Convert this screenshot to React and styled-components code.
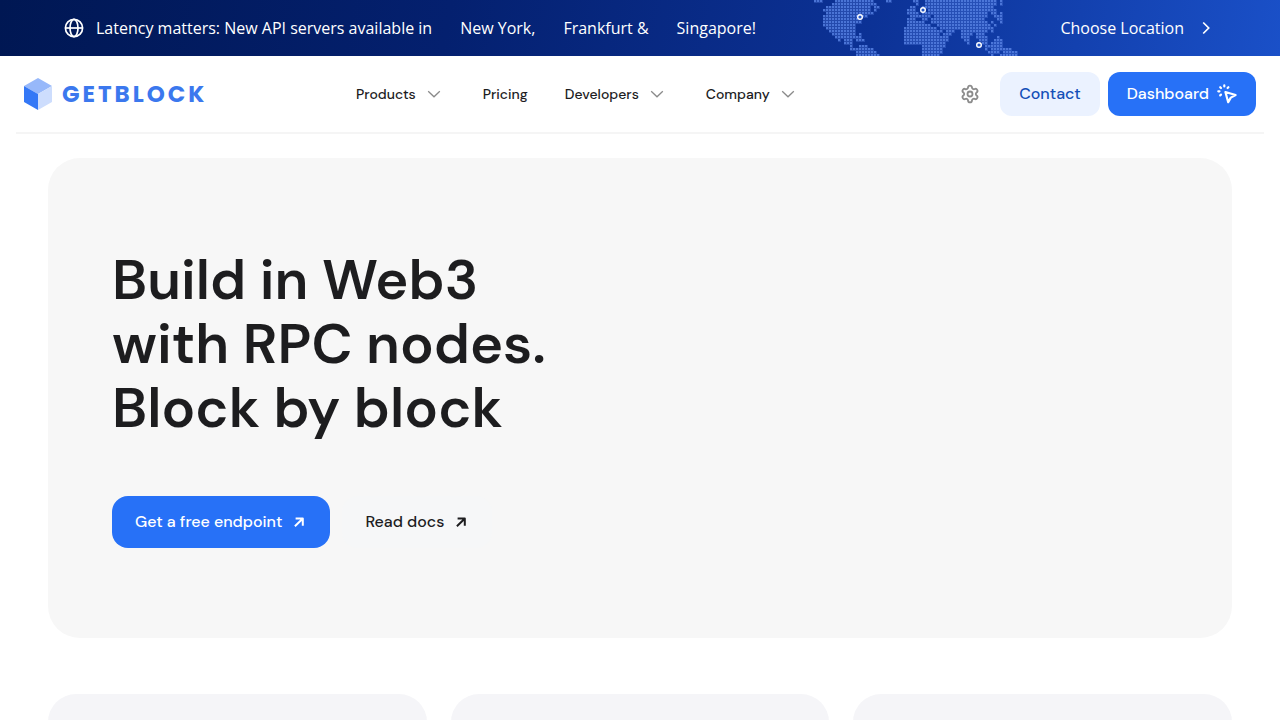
import React from "react";
import styled, { createGlobalStyle } from "styled-components";
import { Settings } from "lucide-react";

// Land masses of the banner map, one list of [first, last] columns per row
const mapRows = [
  [[0, 2], [7, 19], [24, 25], [33, 34], [37, 60], [62, 62]],
  [[6, 20], [34, 34], [37, 60], [62, 62]],
  [[4, 18], [20, 21], [32, 33], [36, 59]],
  [[3, 18], [20, 20], [31, 33], [38, 60]],
  [[4, 19], [31, 34], [36, 57], [59, 60], [62, 62]],
  [[3, 17], [32, 38], [40, 57], [60, 62]],
  [[3, 15], [31, 33], [36, 37], [39, 56], [61, 62]],
  [[3, 15], [31, 36], [39, 57], [59, 59], [62, 62]],
  [[3, 13], [31, 38], [41, 58], [60, 60]],
  [[4, 13], [30, 40], [42, 59]],
  [[5, 13], [30, 42], [44, 46], [49, 57], [59, 59]],
  [[6, 13], [15, 15], [30, 41], [43, 45], [49, 52], [54, 56]],
  [[7, 15], [30, 44], [49, 51], [54, 57], [61, 61]],
  [[8, 8], [10, 12], [14, 16], [30, 44], [50, 51], [55, 57], [60, 62]],
  [[10, 12], [30, 43], [51, 51], [56, 57], [59, 62]],
  [[12, 12], [15, 17], [36, 43], [57, 62]],
  [[12, 19], [36, 42], [57, 57], [59, 65]],
  [[14, 20], [36, 42], [58, 61], [63, 67]],
  [[14, 21], [36, 41], [59, 59], [62, 67]],
];

const cities = [
  { name: "New York", x: 46, y: 17 },
  { name: "Frankfurt", x: 109, y: 10 },
  { name: "Singapore", x: 165, y: 45 },
];

const navLinks = [
  { title: "Products", menu: true },
  { title: "Pricing", menu: false },
  { title: "Developers", menu: true },
  { title: "Company", menu: true },
];

const GlobeIcon = () => (
  <svg width="20" height="20" viewBox="0 0 20 20" fill="none" stroke="#fff" strokeWidth="1.7">
    <circle cx="10" cy="10" r="8.6" />
    <ellipse cx="10" cy="10" rx="4" ry="8.6" />
    <path d="M1.4 10h17.2" />
  </svg>
);

const ArrowIcon = () => (
  <svg width="16" height="16" viewBox="0 0 16 16" fill="none" stroke="currentColor" strokeWidth="2" strokeLinejoin="round">
    <path d="M4.6 4.6h7.2v7.2M11.6 4.8L3.9 12.3" />
  </svg>
);

const ChevronIcon = () => (
  <svg width="24" height="24" viewBox="0 0 24 24" fill="none" stroke="#8a8a8a" strokeWidth="1.3">
    <path d="M6.2 9.2l5.8 5.6 5.8-5.6" />
  </svg>
);

const ClickIcon = () => (
  <svg width="20" height="20" viewBox="0 0 20 20" fill="none" stroke="#fff" strokeWidth="2.2" strokeLinecap="round" strokeLinejoin="round">
    <path d="M8.4 8L18.6 11L13.8 13.6L11.2 18.2Z" />
    <path d="M7.3 1.3V2.5M3.2 3.2L4 4M1.3 7.3H2.5M3.2 11.4L4 10.6M11.4 3.2L10.6 4" />
  </svg>
);

const LogoCube = () => (
  <svg width="28" height="32" viewBox="0 0 28 32">
    <path d="M14 0L28 8L14 16L0 8Z" fill="#97b8fa" />
    <path d="M0 8L14 16V32L0 24Z" fill="#3478f6" />
    <path d="M28 8L14 16V32L28 24Z" fill="#cdddfd" />
  </svg>
);

const WorldMap = () => (
  <MapSvg width="204" height="56" viewBox="0 0 204 56" aria-hidden="true">
    <defs>
      <pattern id="dot" width="3" height="3" patternUnits="userSpaceOnUse">
        <rect width="3" height="3" fill="#5c86e8" opacity="0.3" />
        <rect width="2" height="2" fill="#5c86e8" opacity="0.7" />
      </pattern>
    </defs>
    {mapRows.map((runs, row) =>
      runs.map(([from, to]) => (
        <rect
          key={`${row}-${from}`}
          x={from * 3}
          y={row * 3}
          width={(to - from + 1) * 3}
          height="3"
          fill="url(#dot)"
        />
      ))
    )}
    {cities.map((city) => (
      <circle
        key={city.name}
        cx={city.x}
        cy={city.y}
        r="2.3"
        fill="#2456c4"
        stroke="#fff"
        strokeWidth="1.4"
      />
    ))}
  </MapSvg>
);

function App() {
  return (
    <>
      <GlobalStyle />
      <Banner>
        <BannerIcon>
          <GlobeIcon />
        </BannerIcon>
        <BannerCities>
          <span>Latency matters: New API servers available in</span>
          <span>New York,</span>
          <span>Frankfurt &amp;</span>
          <span>Singapore!</span>
        </BannerCities>
        <WorldMap />
        <BannerLink href="#locations">
          Choose Location
          <svg width="20" height="20" viewBox="0 0 20 20" fill="none" stroke="#fff" strokeWidth="1.7">
            <path d="M7.2 4.5l5.5 5.5-5.5 5.5" />
          </svg>
        </BannerLink>
      </Banner>
      <Header>
        <Logo href="/">
          <LogoCube />
          GETBLOCK
        </Logo>
        <Nav>
          {navLinks.map((link) =>
            link.menu ? (
              <NavButton key={link.title} type="button">
                {link.title}
                <ChevronIcon />
              </NavButton>
            ) : (
              <a key={link.title} href="#pricing">
                {link.title}
              </a>
            )
          )}
        </Nav>
        <HeaderActions>
          <SettingsButton type="button" aria-label="Settings">
            <Settings size={20} strokeWidth={2.2} />
          </SettingsButton>
          <HeaderButton type="button">Contact</HeaderButton>
          <HeaderButton type="button" $primary>
            Dashboard
            <ClickIcon />
          </HeaderButton>
        </HeaderActions>
      </Header>
      <Main>
        <Hero>
          <HeroTitle>
            Build in Web3
            <br />
            with RPC nodes.
            <br />
            Block by block
          </HeroTitle>
          <HeroActions>
            <HeroLink href="#endpoint" $primary>
              Get a free endpoint
              <ArrowIcon />
            </HeroLink>
            <HeroLink href="#docs">
              Read docs
              <ArrowIcon />
            </HeroLink>
          </HeroActions>
        </Hero>
        <Cards>
          <Card />
          <Card />
          <Card />
        </Cards>
      </Main>
    </>
  );
}

export default App;

const GlobalStyle = createGlobalStyle`
  * {
    box-sizing: border-box;
  }
  html {
    scrollbar-width: none;
  }
  body {
    margin: 0;
    background: #fff;
    color: #1d1d1f;
    font-family: "DM Sans", Inter, sans-serif;
  }
  a {
    color: inherit;
    text-decoration: none;
  }
  button {
    border: 0;
    padding: 0;
    background: none;
    color: inherit;
    font: inherit;
    cursor: pointer;
  }
  svg {
    display: block;
    flex-shrink: 0;
  }
`;

const Banner = styled.div`
  display: flex;
  align-items: center;
  height: 56px;
  padding: 0 64px;
  overflow: hidden;
  white-space: nowrap;
  color: #fff;
  font-family: "Open Sans", sans-serif;
  font-size: 16px;
  line-height: 24px;
  background: linear-gradient(100deg, #001753 0%, #04206f 35%, #0c3296 68%, #1a50c8 100%);
`;
const BannerIcon = styled.div`
  margin-right: 12px;
`;
const BannerCities = styled.div`
  display: flex;
  gap: 28px;
`;
const MapSvg = styled.svg`
  margin-left: 58px;
`;
const BannerLink = styled.a`
  display: flex;
  align-items: center;
  gap: 12px;
  margin-left: auto;
`;

const Header = styled.header`
  display: flex;
  align-items: center;
  height: 78px;
  margin: 0 16px;
  padding: 0 8px;
  border-bottom: 2px solid #f5f5f5;
`;
const Logo = styled.a`
  display: flex;
  align-items: center;
  gap: 10px;
  width: 184px;
  white-space: nowrap;
  color: #3b78ee;
  font-family: Poppins, "DM Sans", Inter, sans-serif;
  font-size: 23px;
  line-height: 32px;
  font-weight: 700;
  letter-spacing: 3px;
`;
const Nav = styled.nav`
  display: flex;
  align-items: center;
  gap: 37px;
  margin-left: 148px;
  font-size: 14px;
  line-height: 24px;
  font-weight: 500;
`;
const NavButton = styled.button`
  display: flex;
  align-items: center;
  gap: 6px;
`;
const HeaderActions = styled.div`
  display: flex;
  align-items: center;
  gap: 8px;
  margin-left: auto;
`;
const SettingsButton = styled.button`
  margin-right: 12px;
  color: #8c8c8c;
`;
const HeaderButton = styled.button`
  display: flex;
  align-items: center;
  gap: 8px;
  height: 44px;
  padding: 0 19px;
  border-radius: 12px;
  font-size: 16px;
  line-height: 24px;
  font-weight: 500;
  color: ${(props) => (props.$primary ? "#fff" : "#1450b8")};
  background-color: ${(props) => (props.$primary ? "#2771f7" : "#ebf2ff")};
`;

const Main = styled.main`
  padding: 24px 48px 0;
`;
const Hero = styled.section`
  padding: 90px 64px;
  border-radius: 32px;
  background-color: #f7f7f7;
`;
const HeroTitle = styled.h1`
  margin: 0 0 56px;
  font-size: 56px;
  line-height: 64px;
  font-weight: 600;
`;
const HeroActions = styled.div`
  display: flex;
  align-items: center;
  gap: 12px;
`;
const HeroLink = styled.a`
  display: flex;
  align-items: center;
  gap: 9px;
  height: 52px;
  padding: 0 23px;
  border-radius: 16px;
  font-size: 16px;
  line-height: 24px;
  font-weight: 500;
  color: ${(props) => (props.$primary ? "#fff" : "#1d1d1f")};
  background-color: ${(props) => (props.$primary ? "#2771f7" : "#f6f7f8")};
`;
const Cards = styled.section`
  display: grid;
  grid-template-columns: repeat(3, 1fr);
  gap: 24px;
  margin-top: 56px;
`;
const Card = styled.article`
  height: 320px;
  border-radius: 28px;
  background-color: #f5f5f8;
`;
